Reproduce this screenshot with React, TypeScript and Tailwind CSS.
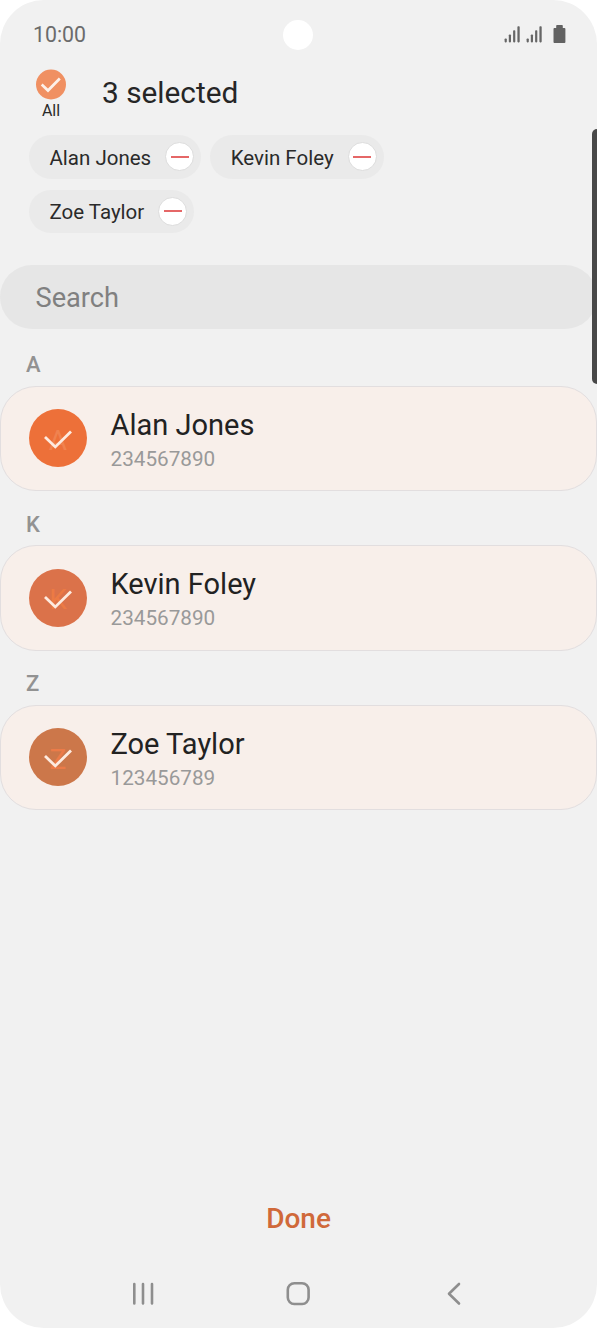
import React from 'react';

interface Contact {
  name: string;
  phone: string;
  avatar: string;
  letter: string;
}

const contacts: Contact[] = [
  { name: 'Alan Jones', phone: '234567890', avatar: 'bg-[#ed7039]', letter: 'text-[#f0824f]' },
  { name: 'Kevin Foley', phone: '234567890', avatar: 'bg-[#db724a]', letter: 'text-[#ec7a44]' },
  { name: 'Zoe Taylor', phone: '123456789', avatar: 'bg-[#cc774a]', letter: 'text-[#ec7b48]' },
];

function Signal() {
  return (
    <svg width="17" height="18" viewBox="0 0 17 18" fill="#666666">
      <rect x="0.6" y="12.4" width="2.2" height="4" rx="0.8" />
      <rect x="4.8" y="8.4" width="2.2" height="8" rx="0.8" />
      <rect x="9.1" y="4.2" width="2.2" height="12.2" rx="0.8" />
      <rect x="13.4" y="0.2" width="2.3" height="16.2" rx="0.8" />
    </svg>
  );
}

function StatusBar() {
  return (
    <div className="relative flex h-[69px] items-center justify-between pl-[33px] pr-[31px]">
      <span className="text-[21.3px] leading-6 text-[#6b6b6b]">10:00</span>
      <div className="absolute left-[283px] top-[20px] h-[30px] w-[30px] rounded-full bg-white" />
      <div className="flex items-center">
        <Signal />
        <span className="w-[5px]" />
        <Signal />
        <svg className="mb-[2px] ml-[10px]" width="13" height="20" viewBox="0 0 13 20" fill="#626262">
          <path d="M4 1h5a.8.8 0 0 1 .8.8V4H11.500a.9.9 0 0 1 .9.9v13.200a.9.9 0 0 1-.9.900H1.400a.9.9 0 0 1-.9-.9V4.900a.9.9 0 0 1 .9-.9H3.200V1.800A.8.8 0 0 1 4 1z" />
        </svg>
      </div>
    </div>
  );
}

function Chip({ name }: { name: string }) {
  return (
    <div className="flex h-[43.5px] items-center rounded-full bg-[#eaeaea] pl-[20.5px] pr-[7px]">
      <span className="pt-[2px] text-[20.5px] leading-6 text-[#2a2a2a]">{name}</span>
      <span className="ml-[14px] flex h-[29px] w-[29px] items-center justify-center rounded-full border border-[#dcdcdc] bg-white">
        <span className="h-[2px] w-[18px] bg-[#e56767]" />
      </span>
    </div>
  );
}

function ContactRow({ contact }: { contact: Contact }) {
  return (
    <section>
      <h2 className="flex h-[54px] items-center pl-[26px] pt-[13px] text-[22px] font-medium leading-6 text-[#929292]">
        {contact.name[0]}
      </h2>
      <div className="flex h-[105.5px] items-center rounded-[36px] border border-[#e2dedf] bg-[#f8efea] pl-[28px]">
        <div className={`relative flex h-[58px] w-[58px] items-center justify-center rounded-full ${contact.avatar}`}>
          <span className={`pt-[5px] text-[28px] leading-none ${contact.letter}`}>{contact.name[0]}</span>
          <svg className="absolute inset-0" width="58" height="58" viewBox="0 0 58 58" fill="none" stroke="#fdebe0" strokeWidth="2.800">
            <path d="M16 28L26.300 37.900L42 22.600" />
          </svg>
        </div>
        <div className="ml-[23.5px] flex flex-col pt-[4px]">
          <span className="text-[29px] leading-[34px] text-[#222222]">{contact.name}</span>
          <span className="mt-[3px] text-[20.7px] leading-7 text-[#999999]">{contact.phone}</span>
        </div>
      </div>
    </section>
  );
}

export default function App() {
  return (
    <div className="h-[1328px] w-[597px] bg-white font-['Roboto',sans-serif]">
      <div className="relative flex h-full flex-col overflow-hidden rounded-[44px] bg-[#f1f1f1]">
        <StatusBar />

        <header className="flex h-[66px] pl-[36px]">
          <div className="flex w-[30px] flex-col items-center">
            <svg width="30" height="31" viewBox="0 0 30 31" fill="none">
              <circle cx="15" cy="15.500" r="15" fill="#f09062" />
              <path d="M5.700 15.500L12 21.500L23.800 9.500" stroke="#fdf1ea" strokeWidth="2.700" />
            </svg>
            <span className="mt-[1px] text-[16px] leading-5 text-[#2a2a2a]">All</span>
          </div>
          <h1 className="ml-[36px] mt-[6px] text-[29.8px] leading-9 text-[#262626]">3 selected</h1>
        </header>

        <div className="flex flex-wrap gap-x-[9px] gap-y-[11px] pl-[29px] pr-[160px]">
          {contacts.map((c) => (
            <Chip key={c.name} name={c.name} />
          ))}
        </div>

        <div className="mt-[32px] flex h-[63.5px] shrink-0 items-center rounded-full bg-[#e6e6e6] pl-[35.5px] pt-[3px] text-[27.2px] leading-8 text-[#808080]">
          Search
        </div>

        <main className="mt-[3px]">
          {contacts.map((c) => (
            <ContactRow key={c.name} contact={c} />
          ))}
        </main>

        <footer className="mt-auto">
          <div className="flex h-[64px] items-center justify-center pt-[2px] text-[28px] font-medium text-[#d0693a]">Done</div>
          <nav className="mt-[10px] flex h-[68px] items-center justify-between pl-[131px] pr-[135px]">
            <svg width="24" height="24" viewBox="0 0 24 24" stroke="#8e8e8e" strokeWidth="2.600" strokeLinecap="round">
              <path d="M3.300 2v19.500M12 2v19.500M21 2v19.500" />
            </svg>
            <svg className="mr-[5px]" width="26" height="26" viewBox="0 0 26 26" fill="none" stroke="#8e8e8e" strokeWidth="2.600">
              <rect x="2.800" y="2.200" width="20.800" height="20.800" rx="6.500" />
            </svg>
            <svg width="16" height="24" viewBox="0 0 16 24" fill="none" stroke="#8e8e8e" strokeWidth="2.600" strokeLinecap="round" strokeLinejoin="round">
              <path d="M13 2L3 11.800L13 21.500" />
            </svg>
          </nav>
        </footer>

        {/* Edge panel handle */}
        <div className="absolute right-0 top-[129px] h-[255px] w-[5.500px] rounded-l-[5px] bg-[#484848]" />
      </div>
    </div>
  );
}
